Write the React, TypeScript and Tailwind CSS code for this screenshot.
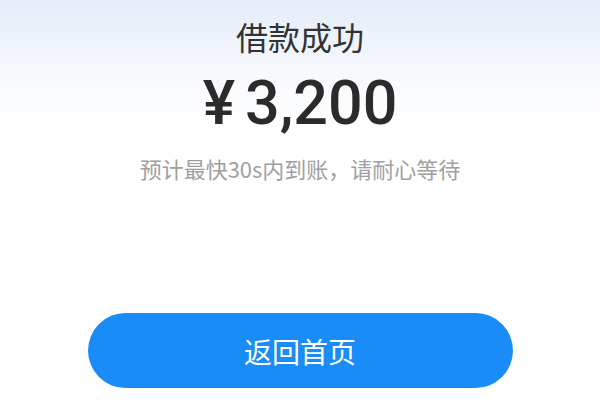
export default function App() {
  return (
    <div
      className="w-[600px] h-[400px] overflow-hidden bg-[linear-gradient(180deg,#e5edf9_0%,#eef3fb_10%,#f8fafd_20%,#ffffff_32%)] flex flex-col items-center"
      style={{ fontFamily: '"Noto Sans CJK SC", "Noto Sans", sans-serif' }}
    >
      <h1 className="pt-[16px] text-[32px] leading-[40px] text-[#333333] font-normal">借款成功</h1>
      <div
        className="mt-[15px] text-[61px] leading-[64px] text-[#2b2b2b] font-medium flex items-baseline"
        style={{ fontFamily: 'Roboto, "Noto Sans CJK SC", sans-serif' }}
      >
        <span className="mr-[10px]">¥</span>
        <span>3,200</span>
      </div>
      <p className="mt-[18px] text-[22px] leading-[30px] text-[#a0a0a0]">预计最快30s内到账，请耐心等待</p>
      <button className="mt-auto mb-[12px] w-[425px] h-[75px] rounded-full bg-[#1a8cf7] text-white text-[28px] leading-none">
        返回首页
      </button>
    </div>
  );
}
